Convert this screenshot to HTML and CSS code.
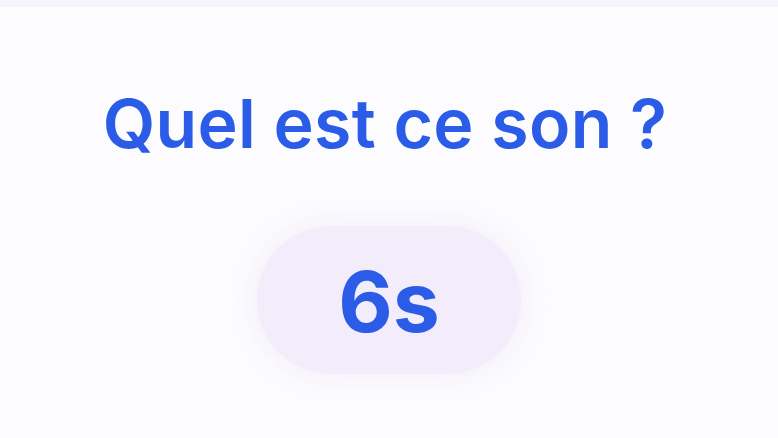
FILE: index.html
```html
<!DOCTYPE html>
<html lang="fr">
<head>
<meta charset="utf-8">
<title>Quel est ce son ?</title>
<link rel="stylesheet" href="styles.css">
</head>
<body>
<div class="topbar"></div>
<main class="screen">
  <h1 class="question">Quel est ce son ?</h1>
  <div class="timer">6s</div>
</main>
</body>
</html>
```
FILE: styles.css
```css
html, body {
  margin: 0;
  padding: 0;
  height: 100%;
}
body {
  background: #fcfcfe;
  font-family: Inter, "Liberation Sans", Arial, sans-serif;
  overflow: hidden;
}
.topbar {
  height: 7px;
  background: #f4f4fd;
}
.screen {
  display: flex;
  flex-direction: column;
  align-items: center;
  padding-top: 76px;
}
.question {
  margin: 0 8px 0 0;
  font-size: 68px;
  font-weight: 600;
  line-height: 80px;
  color: #2a5ce8;
  letter-spacing: 0.3px;
}
.timer {
  margin-top: 63px;
  width: 264px;
  height: 148px;
  border-radius: 74px;
  background: #f3ecfb;
  box-shadow: 0 0 24px 6px rgba(240, 234, 250, 0.6);
  display: flex;
  align-items: center;
  justify-content: center;
  font-size: 84px;
  font-weight: 700;
  color: #2a5ce8;
  padding-top: 2px;
  box-sizing: border-box;
}
```
